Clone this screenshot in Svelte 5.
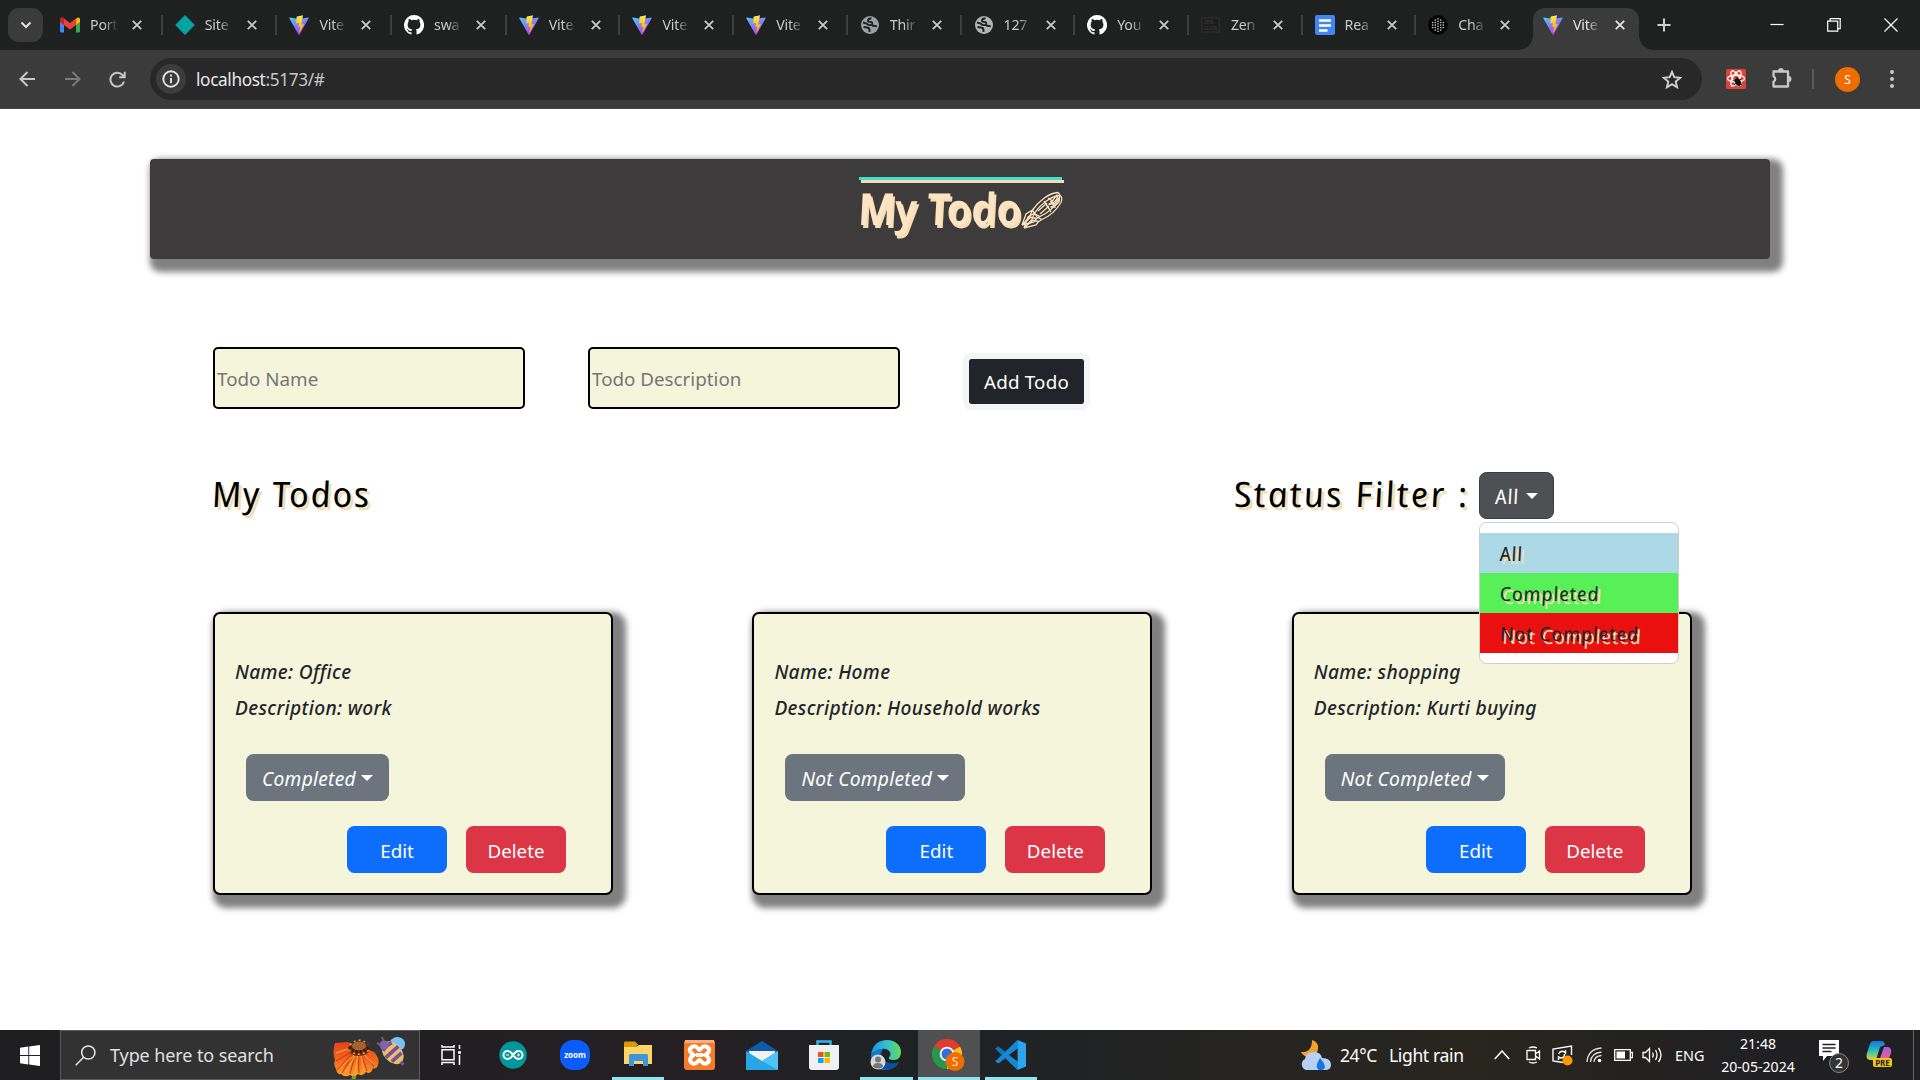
<script>
  const tabs = [
    ['gmail', 'Port'], ['diamond', 'Site'], ['vite', 'Vite'], ['github', 'swa'], ['vite', 'Vite'],
    ['vite', 'Vite'], ['vite', 'Vite'], ['globe', 'Thir'], ['globe2', '127'], ['github', 'You'],
    ['zen', 'Zen'], ['docs', 'Rea'], ['chat', 'Cha'], ['vite', 'Vite']
  ];
  const todos = [
    { name: 'Office', description: 'work', status: 'Completed' },
    { name: 'Home', description: 'Household works', status: 'Not Completed' },
    { name: 'shopping', description: 'Kurti buying', status: 'Not Completed' }
  ];
  const filters = [['All', 'blue'], ['Completed', 'green'], ['Not Completed', 'red']];
</script>

{#snippet favicon(kind)}
  <svg class="fav" viewBox="0 0 20 20">
    {#if kind === 'gmail'}
      <path d="M0 5v11.2q0 1.3 1.3 1.3H4V7z" fill="#4285f4" />
      <path d="M20 5v11.2q0 1.3-1.3 1.3H16V7z" fill="#34a853" />
      <path d="M16 4.2 17 3q1.600-1.200 3 .8V7l-4 3z" fill="#fbbc04" />
      <path d="M0 7V4.300Q.8 1.600 3.300 3L10 8l6.200-4.700V10L10 14.500 4 10z" fill="#ea4335" />
      <path d="M0 7V4.300Q.8 1.600 3.300 3L4 3.500V10z" fill="#c5221f" />
    {:else if kind === 'diamond'}
      <path d="M10 .5 19.300 10 10 19.500.7 10z" fill="#05a3a4" stroke="#05a3a4" stroke-linejoin="round" />
    {:else if kind === 'vite'}
      <defs>
        <linearGradient id="va" x1="0" y1="0" x2=".6" y2="1"><stop stop-color="#41d1ff" /><stop offset="1" stop-color="#bd34fe" /></linearGradient>
        <linearGradient id="vb" x1="0" y1="0" x2="0" y2="1"><stop stop-color="#ffea83" /><stop offset=".2" stop-color="#ffdd35" /><stop offset="1" stop-color="#ffa800" /></linearGradient>
      </defs>
      <path d="M19.700 3.200 10.500 19.500q-.5.800-1 0L.3 3.200q-.3-.9.700-.8L10 4l9-1.600q1-.1.700.8z" fill="url(#va)" />
      <path d="M14.300.2 8 1.400q-.4.100-.4.500L7.200 8.500l2.800-.5-.7 4 2-.5-1 5.500q.4.500.7-.1l4-8-2.700.5L14 .6q0-.4.300-.4z" fill="url(#vb)" />
    {:else if kind === 'github'}
      <path transform="scale(1.250)" fill="#fff" d="M8 0a8 8 0 0 0-2.530 15.590c.4.070.55-.17.55-.38v-1.490c-2.010.37-2.530-.49-2.690-.94-.09-.23-.48-.94-.82-1.130-.28-.15-.68-.52-.01-.53.63-.01 1.080.58 1.230.82.72 1.210 1.870.87 2.330.66.07-.52.28-.87.51-1.070-1.780-.2-3.640-.89-3.640-3.950 0-.87.31-1.590.82-2.150-.08-.2-.36-1.020.08-2.120 0 0 .67-.21 2.200.82a7.600 7.600 0 0 1 4 0c1.530-1.040 2.200-.82 2.200-.82.44 1.100.16 1.920.08 2.120.51.56.82 1.270.82 2.150 0 3.070-1.870 3.750-3.650 3.950.29.25.54.73.54 1.480v2.200c0 .21.15.46.55.38A8 8 0 0 0 8 0z" />
    {:else if kind === 'globe' || kind === 'globe2'}
      <circle cx="10" cy="10" r="9" fill={kind === 'globe' ? '#9aa0a6' : '#b4b5b5'} />
      <path d="M11.500 3.200q-3.500.2-3.500 2.200 0 1.500 2.200 1.500 2.300.2 2 2-.4 1.500-2.700 1.200-2 0-2.800-1.600L3 7.500M3.500 12l3.500.5q2.500.3 2.500 2.500V17M12 10.800q3-.3 4.800.7" stroke="#202221" stroke-width="1.900" fill="none" />
    {:else if kind === 'zen'}
      <rect x="1" y="3" width="17" height="14" fill="#1d1d1d" stroke="#313131" />
      <text x="3" y="9" font-size="5" fill="#3d3d3d">ZEN</text><text x="3" y="15" font-size="4.500" fill="#3d3d3d">CLASS</text>
    {:else if kind === 'docs'}
      <rect width="20" height="20" rx="2" fill="#4285f4" /><path d="M4 5.500h12M4 10.500h12M4 15.500h8.500" stroke="#fff" stroke-width="2.300" />
    {:else}
      <circle cx="10" cy="10" r="10" fill="#050505" />
      {#each [[10, 6], [7.300, 5], [12.700, 5], [4.700, 3], [15.300, 3]] as [x, n]}
        {#each Array(n) as _, k}<circle cx={x} cy={10 + (k - (n - 1) / 2) * 2.500} r=".85" fill="#b9b9b9" />{/each}
      {/each}
    {/if}
  </svg>
{/snippet}

<div class="screen">
  <header class="tabstrip">
    <div class="tabsearch"><svg width="12" height="8" viewBox="0 0 12 8"><path d="m1.500 1.500 4.500 4.500 4.500-4.500" fill="none" stroke="#e3e3e3" stroke-width="2" /></svg></div>
    {#each tabs as [icon, title], i}
      <div class="tab" class:first={i < 4} class:active={i === 13} class:plain={i > 11}>
        {@render favicon(icon)}
        <span class="title">{title}</span>
        <svg class="x" viewBox="0 0 10 10"><path d="m.8.8 8.400 8.400M9.200.8.8 9.200" stroke="currentColor" stroke-width="1.800" /></svg>
      </div>
    {/each}
    <svg class="plus" viewBox="0 0 14 14"><path d="M7 .5v13M.5 7h13" stroke="#cfcfcf" stroke-width="2" /></svg>
    <div class="win">
      <svg width="14" height="14" viewBox="0 0 14 14"><path d="M.5 6.500h13" stroke="#fff" stroke-width="1.200" /></svg>
      <svg width="14" height="14" viewBox="0 0 14 14" fill="none" stroke="#fff" stroke-width="1.200"><path d="M.7 3.200h10v10h-10zM3.200 3V.7h10v10H11" /></svg>
      <svg width="14" height="14" viewBox="0 0 14 14"><path d="m.5.5 13 13M13.500.5l-13 13" stroke="#fff" stroke-width="1.200" /></svg>
    </div>
  </header>

  <nav class="toolbar">
    <div class="navs">
      <svg width="17" height="16" viewBox="0 0 17 16" fill="none" stroke="#c7c7c7" stroke-width="2"><path d="M16 8H2M8.500 1 1.500 8l7 7" /></svg>
      <svg width="17" height="16" viewBox="0 0 17 16" fill="none" stroke="#7b7b7b" stroke-width="2"><path d="M1 8h14M8.500 1l7 7-7 7" /></svg>
      <svg width="17" height="17" viewBox="0 0 17 17" fill="none" stroke="#c7c7c7" stroke-width="2"><path d="M15 10.500A6.900 6.900 0 1 1 13.500 4L15.500 6M15.700.8V6.300h-5.500" /></svg>
    </div>
    <div class="omnibox">
      <span class="info"><svg width="18" height="18" viewBox="0 0 18 18"><circle cx="9" cy="9" r="7.700" fill="none" stroke="#e3e3e3" stroke-width="1.900" /><path d="M9 8v5.300M9 4.500v1.900" stroke="#e3e3e3" stroke-width="1.900" /></svg></span>
      <span class="url">localhost<i>:5173/#</i></span>
      <svg class="star" width="20" height="19" viewBox="0 0 20 19"><path d="m10 1.800 2.300 5.400 5.900.5-4.500 3.900 1.400 5.700-5.100-3.100-5.100 3.100 1.400-5.700L1.800 7.700l5.900-.5z" fill="none" stroke="#cfcfcf" stroke-width="1.900" /></svg>
    </div>
    <div class="tools">
      <svg class="react" width="20" height="20" viewBox="0 0 20 20"><rect width="20" height="20" rx="1.500" fill="#dc4437" /><g fill="none" stroke="#fff" stroke-width="1.300"><ellipse cx="10" cy="9.500" rx="8.500" ry="3.300" /><ellipse cx="10" cy="9.500" rx="8.500" ry="3.300" transform="rotate(60 10 9.500)" /><ellipse cx="10" cy="9.500" rx="8.500" ry="3.300" transform="rotate(120 10 9.500)" /></g><ellipse cx="12" cy="13" rx="2.900" ry="4" transform="rotate(-28 12 13)" fill="#111" /><path d="m7 11 9 5M8 16l7-6M11 8l3 10" stroke="#111" /></svg>
      <svg class="puzzle" width="22" height="24" viewBox="0 0 22 24"><path d="M2.500 4.500H17v15H2.500v-4.700q3.500-2.800 0-5.600z" fill="none" stroke="#c7c7c7" stroke-width="2.300" stroke-linejoin="round" /><path d="M6.900 4a2.900 2.900 0 0 1 5.800 0zM17.500 9a3 3 0 0 1 0 6z" fill="#c7c7c7" /></svg>
      <span class="bar"></span><span class="avatar">S</span>
      <svg class="dots" width="4" height="18" viewBox="0 0 4 18" fill="#c7c7c7"><circle cx="2" cy="2" r="2" /><circle cx="2" cy="9" r="2" /><circle cx="2" cy="16" r="2" /></svg>
    </div>
  </nav>

  <main>
    <div class="banner">
      <div class="brand">
        <h1><span class="comic">My Todo</span></h1>
        <svg class="pen" width="42" height="36" viewBox="0 0 42 36" fill="none" stroke="#ffe4c4" stroke-width="1.300"><path d="M12.500 19C19 10 29 2 38 1.500q3 2 1 7C34 17 28 22 20 25.500L15 23zM12.500 19 9.500 26l7 1.500 3.500-2M9.500 26 2 34l4-11 6.500-4M2 34l12-3 2.500-3.500M3 33l7-6M24 10l5 8M28 7q5 2 5 7M31 12q4-6 6-8 2 3-3 7t-5 2zM18 20l9-8" /></svg>
      </div>
    </div>

    <form class="add" onsubmit={(e) => e.preventDefault()}>
      <input placeholder="Todo Name" />
      <input placeholder="Todo Description" />
      <button class="addbtn">Add Todo</button>
    </form>

    <section class="heads">
      <h2><span class="comic">My Todos</span></h2>
      <div class="filter">
        <h2><span class="comic wide">Status Filter :</span></h2>
        <div class="dropdown">
          <button class="all"><span class="comic">All</span><b class="caret"></b></button>
          <div class="menu">
            {#each filters as [label, tone]}
              <a class={tone} href="#top"><span class="comic">{label}</span></a>
            {/each}
          </div>
        </div>
      </div>
    </section>

    <section class="cards">
      {#each todos as t}
        <article>
          <p>Name: {t.name}</p>
          <p>Description: {t.description}</p>
          <button class="status">{t.status}<b class="caret"></b></button>
          <div class="actions"><button class="edit">Edit</button><button class="delete">Delete</button></div>
        </article>
      {/each}
    </section>
  </main>

  <footer class="taskbar">
    <div class="start"><svg width="20" height="21" viewBox="0 0 20 21" fill="#fff"><path d="M0 2.800 8.300 1.600V10H0zM9.200 1.500 20 0v10H9.200zM0 11h8.300v8.400L0 18.200zM9.200 11H20v10L9.200 19.500z" /></svg></div>
    <div class="search">
      <svg width="21" height="21" viewBox="0 0 21 21" fill="none" stroke="#e8e8e8" stroke-width="1.500"><circle cx="13.300" cy="7.500" r="6.600" /><path d="M8.600 12.300.7 20.300" /></svg>
      <span>Type here to search</span>
      <svg class="flower" width="74" height="43" viewBox="0 0 74 43">
        <defs><linearGradient id="pt" x1="0" y1="0" x2="0" y2="1"><stop stop-color="#e8401a" /><stop offset=".55" stop-color="#f2681f" /><stop offset="1" stop-color="#ffa02e" /></linearGradient></defs>
        <path d="M21 36q1 4-1 8" stroke="#6da32f" stroke-width="4" fill="none" />
        <path d="M2 7 15 6 24 10 36 14 41 16Q47 22 45 29 43 34 40 32 38 39 33 36 30 41 25 38 21 42 17 39 12 42 8 38 4 39 3 33 0 29 2 24-1 16 2 7z" fill="url(#pt)" />
        <path d="M22 14 3 25M22 15 4 34M22 15 9 37M23 15 17 38M25 15l1 22M27 15l7 20M29 14l12 17" stroke="#c7360f" fill="none" />
        <path d="M18 12 3 17M21 19 7 32M22 20 13 36M25 19l-3 18M28 19l3 16M30 17l10 11" stroke="#ffbd45" fill="none" />
        <ellipse cx="26" cy="13" rx="10.500" ry="7" fill="#6b2c12" /><ellipse cx="26" cy="10" rx="7" ry="4.500" fill="#a7622c" />
        <path d="M16 11q10 10 21-1" fill="none" stroke="#2f1711" stroke-width="3" stroke-dasharray="2 2" />
        <path d="M16 14q10 9 21-1M17 9q8-9 18-1" fill="none" stroke="#e9a33d" stroke-width="1.500" stroke-dasharray="2 3" />
        <path d="M57 5q6-7 13-2 4 5 0 10l-8 2z" fill="#7bc2f4" />
        <g transform="rotate(48 59 16)"><ellipse cx="60" cy="16" rx="13" ry="9" fill="#efbd6c" /><path d="M52 10q-2 6 0 12M59 7.500v17M66 9.500v13" stroke="#745597" stroke-width="3.800" fill="none" /><path d="M72 16h4" stroke="#745597" stroke-width="3" /></g>
        <path d="m51 6-2-5M48 9l-4-2" stroke="#745597" stroke-width="2" /><circle cx="51" cy="9" r="4.500" fill="#8263a8" />
      </svg>
    </div>
    <div class="apps">
      <div><svg width="21" height="20" viewBox="0 0 21 20" fill="none" stroke="#fff" stroke-width="1.500"><path d="M1 4.700h12v10H1zM1 0v2h12V0M1 20v-2.500h12V20M18.500 0v4M18.500 10v10" /><path d="M17 7.500h3" stroke-width="2.500" /></svg></div>
      <div><svg width="28" height="28" viewBox="0 0 28 28"><circle cx="14" cy="14" r="13.700" fill="#00979d" /><path d="M14 14c-2-3-3.500-4-5.500-4a4 4 0 0 0 0 8c2 0 3.500-1 5.500-4 2-3 3.500-4 5.500-4a4 4 0 0 1 0 8c-2 0-3.500-1-5.500-4z" fill="none" stroke="#fff" stroke-width="2" /><path d="M7 14h3M18 14h3m-1.500-1.500v3" stroke="#fff" /></svg></div>
      <div><svg width="30" height="30" viewBox="0 0 30 30"><rect width="30" height="30" rx="13" fill="#0b5cff" /><text x="15" y="17.500" text-anchor="middle" font-size="8" font-weight="700" fill="#fff">zoom</text></svg></div>
      <div class="run"><svg width="30" height="28" viewBox="0 0 30 28"><path d="M1 1.500q0-1 1-1h10l3 3-3 4H1z" fill="#d69a0f" /><path d="M1 6h12l3-2h13v19H1z" fill="#ffd467" /><path d="M6 25V14.500q0-1.500 1.500-1.500h16q1.500 0 1.500 1.500V25h-5v-5h-9v5z" fill="#3b96dd" /></svg></div>
      <div><svg width="31" height="30" viewBox="0 0 31 30"><rect width="31" height="30" rx="3" fill="#f47a2a" /><path d="M1 0h29v3H1z" fill="#fbaf80" /><path d="M8 7c5-3 6 3 7.500 3S18 4 23 7s0 7-1.500 8c2 1 6 5 1.500 8s-6-3-7.500-3-3 6-7.500 3 0-7 1.500-8C8 14 3 10 8 7z" fill="none" stroke="#fff" stroke-width="4" /><path d="M12 15h7" stroke="#fff" stroke-width="4" /></svg></div>
      <div><svg width="32" height="29" viewBox="0 0 32 29"><path d="M0 10 16 0l16 10v6H0z" fill="#0f5bab" /><path d="M3 10h26v8l-13 4L3 16z" fill="#f2f2f2" /><path d="M0 10v19h32V10L16 20z" fill="#26a7e8" /><path d="m16 20 16 9V10z" fill="#4fc4f5" /></svg></div>
      <div><svg width="30" height="30" viewBox="0 0 30 30"><path d="M8.500 7V1.500h13V7" fill="none" stroke="#35b1ee" stroke-width="2.500" /><path d="M0 5h30v22q0 3-3 3H3q-3 0-3-3z" fill="#f0f0f0" /><path d="M9 12h5.500v5H9z" fill="#f25022" /><path d="M15.500 12H21v5h-5.500z" fill="#7fba00" /><path d="M9 18h5.500v5H9z" fill="#00a4ef" /><path d="M15.500 18H21v5h-5.500z" fill="#ffb900" /></svg></div>
      <div class="run"><svg width="32" height="30" viewBox="0 0 32 30">
        <defs><linearGradient id="eg"><stop stop-color="#1596dc" /><stop offset=".5" stop-color="#31bed4" /><stop offset="1" stop-color="#66dc54" /></linearGradient></defs>
        <path d="M1 15C2 5 9 0 17 0c9 0 14 6 14 12 0 5-3 8-7 8-4 0-7-1-4-4 2-4-3-8-8-7C6 10 2 13 1 15z" fill="url(#eg)" /><path d="M1 15q5-7 12-6c-3 3-2 7 1 11 4 5 11 4 15 2-3 6-9 8-14 8C6 30 0 24 1 15z" fill="#1478cf" /><path d="M13 10c-3 4-1 8 2 11 4 4 10 3 14 1-3 6-9 8-14 8-8-5-8-16-2-20z" fill="#0c4f9d" />
        <circle cx="8" cy="22" r="7.500" fill="#d8d8d8" /><circle cx="8" cy="19.500" r="3" fill="#777" /><path d="M3 27q0-4 5-4t5 4q-5 3-10 0" fill="#777" /></svg></div>
      <div class="run current"><svg width="33" height="32" viewBox="0 0 33 32">
        <path d="M15 15 2 7.500A15 15 0 0 1 28 7.500z" fill="#e33b2e" /><path d="M15 15h0L28 7.500A15 15 0 0 1 15 30z" fill="#fbc116" /><path d="M15 15v15A15 15 0 0 1 2 7.500z" fill="#229a49" /><path d="M15 7.500h13" stroke="#e33b2e" /><circle cx="15" cy="15" r="7.300" fill="#fff" /><circle cx="15" cy="15" r="5.500" fill="#2c6fe2" />
        <circle cx="23" cy="22.500" r="9.500" fill="#ef6c00" /><text x="23" y="27" text-anchor="middle" font-size="12" fill="#ffe0c8">S</text></svg></div>
      <div class="run"><svg width="31" height="30" viewBox="0 0 31 30"><path d="M22.500 0 10.500 12 3.500 6.500 0 8.500 22.500 30z" fill="#0879c6" /><path d="M22.500 30 10.500 18l-7 5.500L0 21.500 22.500 0z" fill="#1687d6" /><path d="M22.500 0 31 3.500v23L22.500 30z" fill="#2ba5f2" /><path d="M22.500 8.500v13L14 15z" fill="#202020" /></svg></div>
    </div>
    <div class="tray">
      <svg class="weather" width="31" height="31" viewBox="0 0 31 31"><path d="M12 0q7 2 6 9t-8 8q-7 0-9-5 11 1 11-12z" fill="#f0a22d" /><path d="M6 30a6 6 0 0 1-1-11q1-7 9-7 7 0 8 6 9 0 9 7 0 5-6 5z" fill="#b9cff4" /><path d="M20 18q7 8 4 11-4 3-7-1-1-4 3-10z" fill="#1477df" /></svg>
      <span class="temp">24°C</span><span class="cond">Light rain</span>
      <svg class="chev" width="16" height="10" viewBox="0 0 16 10" fill="none" stroke="#fff" stroke-width="1.500"><path d="m.8 9 7.200-8 7.200 8" /></svg>
      <svg class="cam" width="15" height="18" viewBox="0 0 15 18" fill="none" stroke="#fff" stroke-width="1.300"><path d="M1 4.500h8.500v9H1zM9.500 8l4-3v8l-4-3M3 2Q7 0 11 2M3 16q4 2 8 0" /></svg>
      <svg class="sync" width="21" height="21" viewBox="0 0 21 21" fill="none" stroke="#fff" stroke-width="1.400"><path d="M11 17.500 1 16V4l18.500-3v9M6.500 9q2-4 6-2l1 1V5m-1 4q0 4-4 4l-2-1v3" /><circle cx="15.500" cy="15.500" r="5" fill="#ff9800" stroke="none" /></svg>
      <svg class="wifi" width="17" height="16" viewBox="0 0 17 16" fill="none" stroke="#ddd" stroke-width="1.300"><path d="M1 15Q2 2 15.500 1M4.500 15Q5 6 15.500 5M8 15q.5-6 7.500-6.500" /><circle cx="13.500" cy="13.500" r="1.800" fill="#fff" stroke="none" /></svg>
      <svg class="bat" width="19" height="12" viewBox="0 0 19 12"><path d="M.7.7h15.600v10.600H.7zM17 3.500h1.500v5H17" fill="none" stroke="#fff" stroke-width="1.300" /><path d="M2.500 2.500H11v7H2.500z" fill="#fff" /></svg>
      <svg class="vol" width="21" height="16" viewBox="0 0 21 16" fill="none" stroke="#fff" stroke-width="1.300"><path d="M1 5.500h2.500l4-4v13l-4-4H1zM10.500 5.500q1.500 2.500 0 5M13.500 3q3 5 0 10M16.500 1q5 7 0 14" /></svg>
      <span class="eng">ENG</span>
      <div class="clock"><span>21:48</span><span>20-05-2024</span></div>
      <svg class="note" width="31" height="36" viewBox="0 0 31 36"><path d="M0 3h20v16H8l-4 5v-5H0z" fill="#fff" /><path d="M3.500 7.500h13M3.500 11h13M3.500 14.500h9" stroke="#222" stroke-width="1.500" /><circle cx="20" cy="26" r="9.500" fill="#343434" stroke="#888" /><text x="20" y="31" text-anchor="middle" font-size="14" fill="#fff">2</text></svg>
      <svg class="copilot" width="26" height="28" viewBox="0 0 26 28"><defs><linearGradient id="cp" x1="0" y1="0" x2="0" y2="1"><stop stop-color="#1673dd" /><stop offset=".5" stop-color="#24bfc2" /><stop offset="1" stop-color="#e5d431" /></linearGradient><linearGradient id="cq" x1="0" y1="0" x2="0" y2="1"><stop stop-color="#a35be9" /><stop offset="1" stop-color="#f2667a" /></linearGradient></defs><path d="M7 0h9q2 0 3 4l-5 2-4 13H5Q-1 19 1 12L4 3q1-3 3-3z" fill="url(#cp)" /><path d="M18 6h4q4 1 3 6l-3 8h-9z" fill="url(#cq)" /><rect x="7" y="17" width="19" height="9" rx="2" fill="#f8c412" /><text x="16.500" y="24.500" text-anchor="middle" font-size="8" font-weight="700" fill="#222">PRE</text></svg>
      <span class="peek"></span>
    </div>
  </footer>
</div>

<style>
  :global(body) { margin: 0; overflow: hidden; background: #fff; }
  * { box-sizing: border-box; }
  .screen { width: 1920px; height: 1080px; display: flex; flex-direction: column; font-family: "Noto Sans", "Open Sans", sans-serif; font-size: 18.800px; color: #212529; }
  svg { display: block; flex: none; }
  button { font-family: inherit; font-size: inherit; margin: 0; }

  .tabstrip { height: 50px; background: #1f2120; display: flex; align-items: center; padding-left: 8px; flex: none; }
  .tabsearch { width: 35px; height: 34px; border-radius: 11px; background: #3b3b3b; display: grid; place-items: center; margin-right: 5px; }
  .tab { width: 113.700px; height: 20px; display: flex; align-items: center; padding-left: 12px; color: #c9c9c9; border-right: 2px solid #3e403f; flex: none; position: relative; }
  .tab.first { width: 114.700px; }
  .tab.plain { border-color: transparent; }
  .fav { width: 20px; height: 20px; margin-right: 10px; }
  .title { width: 28px; overflow: hidden; white-space: nowrap; font-size: 14.200px; line-height: 20px; letter-spacing: -.2px; mask-image: linear-gradient(90deg, #000 50%, transparent); }
  .x { width: 10px; height: 10px; margin-left: 14px; }
  .tab.active { width: 106px; height: 42px; margin: 8px 0 0 3px; padding: 0 0 8px 10px; border: 0; background: #3b3b3b; border-radius: 12px 12px 0 0; color: #e3e3e3; }
  .tab.active::before, .tab.active::after { content: ""; position: absolute; bottom: 0; width: 14px; height: 14px; }
  .tab.active::before { left: -14px; background: radial-gradient(circle at 0 0, transparent 13.500px, #3b3b3b 14px); }
  .tab.active::after { right: -14px; background: radial-gradient(circle at 100% 0, transparent 13.500px, #3b3b3b 14px); }
  .plus { width: 14px; height: 14px; margin-left: 18px; }
  .win { display: flex; gap: 43px; margin-left: auto; padding-right: 22px; }

  .toolbar { height: 59px; background: #3b3b3b; border-bottom: 1px solid #494949; display: flex; align-items: center; flex: none; }
  .navs { display: flex; gap: 28px; padding-left: 19px; width: 150px; }
  .omnibox { width: 1552px; height: 42px; border-radius: 21px; background: #282828; display: flex; align-items: center; padding: 0 20px 0 6px; }
  .info { width: 30px; height: 30px; border-radius: 50%; background: #3c3c3c; display: grid; place-items: center; }
  .url { margin-left: 10px; font-size: 17.200px; color: #e8e8e8; letter-spacing: -.35px; }
  .url i { font-style: normal; color: #c7c7c7; }
  .star { margin-left: auto; }
  .tools { display: flex; align-items: center; flex: 1; padding-left: 24px; }
  .puzzle { margin-left: 25px; }
  .bar { width: 2px; height: 20px; background: #5a5a5a; margin-left: 19px; }
  .avatar { width: 25px; height: 25px; border-radius: 50%; background: #ef6c00; color: #fff; font-size: 12px; display: grid; place-items: center; margin-left: 21px; }
  .dots { margin-left: 30px; }

  main { flex: 1; background: #fff; padding: 50px 150px 0; }
  .banner { height: 100px; border-radius: 4px; background: #3e3b3c; box-shadow: 6.250px 6.250px 6.250px 6.250px gray; display: flex; justify-content: center; align-items: flex-start; padding-top: 18px; }
  .brand { width: 203px; border-top: 3px solid #40e0d0; display: flex; align-items: flex-start; filter: drop-shadow(2px 3px 0 #f5deb3); }
  .comic { font-family: "Comic Sans MS", "Noto Sans", sans-serif; font-style: italic; display: inline-block; transform: skewX(9deg); transform-origin: 0 75%; white-space: nowrap; }
  h1 { margin: 3px 0 0; width: 161px; font-size: 44px; line-height: 50px; font-weight: 600; color: #ffe4c4; letter-spacing: -.7px; }
  .pen { margin-top: 11px; }

  .add { display: flex; padding: 88px 0 0 63px; height: 151px; align-items: flex-start; }
  input { width: 312px; height: 62px; margin-right: 63px; border: 2px solid #000; border-radius: 5px; background: beige; padding: 2px 2px 0; font: 18.800px "Noto Sans", sans-serif; }
  input::placeholder { color: #757575; opacity: 1; }
  .addbtn { width: 127px; height: 57px; margin-top: 6px; border: 6px solid #f5f5f5; border-radius: 8px; background: #212529; background-clip: padding-box; color: #fff; padding: 0; letter-spacing: .2px; }

  .heads { display: flex; justify-content: space-between; padding: 62px 91px 0 63px; height: 202px; align-items: flex-start; }
  h2 { margin: -2px 0 0; font-size: 35px; line-height: 47px; font-weight: 400; color: #000; text-shadow: 2.500px 2.500px 0 #f5deb3; letter-spacing: 1.800px; }
  .wide { letter-spacing: 2.300px; }
  .filter { display: flex; width: 444px; }
  .filter h2 { width: 244px; }
  .dropdown { position: relative; }
  .all { width: 75px; height: 47px; border: 1px solid #373b3e; border-radius: 7.500px; background: #4d5154; color: #fff; display: flex; align-items: center; padding: 2px 0 0 16px; font-size: 20px; letter-spacing: .8px; }
  .caret { width: 0; height: 0; border: 6px solid transparent; border-top-color: currentColor; border-bottom: 0; margin-left: 5px; display: inline-block; }
  .all .caret { margin: -2px 0 0 6px; }
  .menu { position: absolute; left: 0; top: 50px; z-index: 2; width: 200px; height: 142px; border: 1px solid #ccc; border-radius: 7.500px; background: #fff; padding: 10px 0; }
  .menu a { display: block; height: 40px; line-height: 42px; padding-left: 21px; font-size: 19.500px; color: #212529; text-decoration: none; text-shadow: 2.500px 2.500px 0 #f5deb3; letter-spacing: .75px; }
  .blue { background: #add8e6; } .green { background: #57f157; } .red { background: #eb1010; }

  .cards { display: flex; gap: 139.400px; padding-left: 63px; }
  article { width: 400px; height: 283px; border: 2px solid #000; border-radius: 7px; background: beige; box-shadow: 6.250px 6.250px 6.250px 6.250px gray; padding: 40px 20px 0; font-style: italic; flex: none; }
  p { margin: 0; line-height: 36px; font-weight: 500; font-size: 19.200px; letter-spacing: .32px; }
  .status { height: 47px; margin: 28px 0 0 11px; border: 0; border-radius: 7.500px; background: #6c757d; color: #fff; font-style: italic; font-size: 19.200px; letter-spacing: .27px; padding: 1px 16px 0; display: flex; align-items: center; }
  .actions { display: flex; gap: 19px; margin: 25px 0 0 112px; }
  .edit, .delete { width: 100px; height: 47px; border: 0; border-radius: 7.500px; color: #fff; padding: 2px 0 0; }
  .edit { background: #0d6efd; } .delete { background: #dc3545; }

  .taskbar { height: 50px; background: linear-gradient(90deg, #1e1e20 0, #241f23 36%, #1e2225 48%, #232323 60%, #29261f 77%, #201f22 92%); display: flex; flex: none; color: #fff; }
  .start { width: 60px; display: grid; place-items: center; }
  .search { width: 360px; border: 1px solid #5b5b5b; background: #323233; display: flex; align-items: center; padding-left: 14px; color: #e0e0e0; font-size: 18px; }
  .search span { margin-left: 14px; width: 223px; letter-spacing: -.1px; white-space: nowrap; }
  .flower { align-self: flex-end; }
  .apps { display: flex; width: 640px; }
  .apps div { width: 62.200px; display: grid; place-items: center; position: relative; }
  .apps .run::after { content: ""; position: absolute; bottom: 0; left: 5px; right: 5px; height: 3px; background: #8de6ef; }
  .apps .current { background: #505050; }
  .apps .current::after { left: 0; right: 0; }
  .tray { display: flex; align-items: center; margin-left: auto; width: 620px; font-size: 17.500px; white-space: nowrap; }
  .temp { width: 38px; margin-left: 9px; letter-spacing: -.4px; }
  .cond { width: 76px; margin-left: 11px; letter-spacing: -.35px; }
  .chev { margin-left: 29px; } .cam { margin-left: 16px; } .sync { margin-left: 11px; } .wifi { margin-left: 13px; } .bat { margin-left: 11px; } .vol { margin-left: 9px; }
  .eng { margin-left: 12px; width: 30px; font-size: 14.400px; }
  .clock { width: 76px; margin-left: 15px; font-size: 14.100px; display: flex; flex-direction: column; align-items: center; line-height: 23px; }
  .note { margin-left: 23px; } .copilot { margin-left: 16px; }
  .peek { width: 1px; height: 50px; background: #666; margin-left: 21px; }
</style>
